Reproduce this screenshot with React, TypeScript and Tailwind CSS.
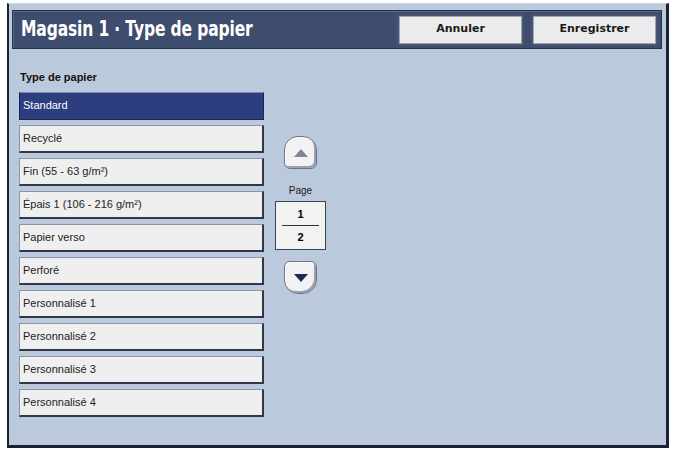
import React from 'react';

const items = [
  'Standard',
  'Recyclé',
  'Fin (55 - 63 g/m²)',
  'Épais 1 (106 - 216 g/m²)',
  'Papier verso',
  'Perforé',
  'Personnalisé 1',
  'Personnalisé 2',
  'Personnalisé 3',
  'Personnalisé 4',
];

function TopButton({ label }: { label: string }) {
  return (
    <button className="w-[127px] h-[32px] rounded-[3px] border-2 border-[#4a5570] bg-[#ececec] shadow-[inset_0_0_0_1px_#9aa4b8] text-[11px] font-bold text-[#1a1a1a] [font-family:'DejaVu_Sans',sans-serif]">
      {label}
    </button>
  );
}

function ArrowButton({ dir }: { dir: 'up' | 'down' }) {
  return (
    <button
      className={
        'w-[33px] h-[33px] flex items-center justify-center border border-[#6c7488] bg-[#f2f2f2] shadow-[inset_-2px_-2px_0_#9aa0ad,inset_1px_1px_0_#ffffff] ' +
        (dir === 'up' ? 'rounded-t-[14px] rounded-b-[6px]' : 'rounded-b-[14px] rounded-t-[6px]')
      }
    >
      <svg width="16" height="10" viewBox="0 0 16 10">
        {dir === 'up' ? (
          <polygon points="8,1 15,9 1,9" fill="#7f8796" />
        ) : (
          <polygon points="1,1 15,1 8,9" fill="#1f2b52" />
        )}
      </svg>
    </button>
  );
}

export default function App() {
  return (
    <div className="w-[674px] h-[451px] bg-white pt-[3px] pl-[7px] [font-family:'Liberation_Sans',Arial,sans-serif]">
      <div className="w-[662px] h-[445px] bg-[#bacadc] border-l-2 border-r-[3px] border-b-[3px] border-t border-[#1d2230] border-t-[#c9d6e4] flex flex-col">
        <div className="mt-[6px] ml-[3px] mr-[4px] h-[39px] bg-[#3e4d6d] border border-[#27324a] shadow-[inset_1px_1px_0_#56668a] flex items-center pl-[8px] pr-[3px]">
          <span className="inline-block origin-left [transform:scaleX(0.74)] text-white font-bold text-[21px] tracking-[-0.2px] whitespace-nowrap [font-family:'DejaVu_Sans',sans-serif]">
            Magasin 1 · Type de papier
          </span>
          <div className="ml-auto flex gap-[7px]">
            <TopButton label="Annuler" />
            <TopButton label="Enregistrer" />
          </div>
        </div>

        <div className="flex pl-[10px] pt-[20px]">
          <div className="flex flex-col">
            <div className="text-[11px] font-bold text-[#111] pl-[1px] mb-[6px]">
              Type de papier
            </div>
            <div className="flex flex-col gap-[5px]">
              {items.map((it, i) => (
                <div
                  key={it}
                  className={
                    'w-[245px] h-[28px] flex items-center pl-[3px] text-[11px] border ' +
                    (i === 0
                      ? 'bg-[#2c3e80] text-white border-[#1c2650] border-t-[#7d87a8]'
                      : 'bg-[#efefef] text-[#222] border-[#8c96a8] border-b-2 border-r-2 border-b-[#30384a] border-r-[#30384a]')
                  }
                >
                  {it}
                </div>
              ))}
            </div>
          </div>

          <div className="ml-[11px] mt-[67px] flex flex-col items-center w-[51px]">
            <ArrowButton dir="up" />
            <div className="text-[10px] text-[#1a1a1a] mt-[14px] mb-[3px]">Page</div>
            <div className="w-[51px] h-[49px] bg-[#f2f2f2] border border-[#3a4256] flex flex-col items-center justify-center">
              <span className="text-[11px] font-bold leading-[14px]">1</span>
              <div className="w-[37px] h-px bg-[#333] my-[4px]" />
              <span className="text-[11px] font-bold leading-[14px]">2</span>
            </div>
            <div className="mt-[11px]">
              <ArrowButton dir="down" />
            </div>
          </div>
        </div>
      </div>
    </div>
  );
}
